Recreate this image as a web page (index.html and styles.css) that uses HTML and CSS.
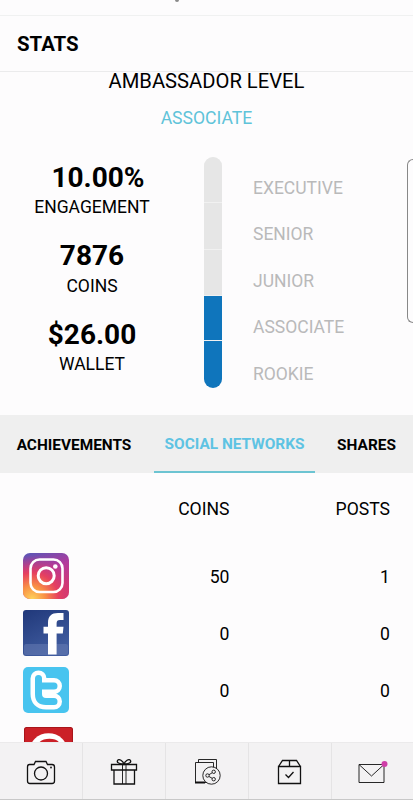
FILE: index.html
```html
<!DOCTYPE html>
<html lang="en">
<head>
    <meta charset="UTF-8">
    <meta name="viewport" content="width=device-width, initial-scale=1.0">
    <title>Stats</title>
    <link rel="stylesheet" href="styles.css">
</head>
<body>
    <div class="top-strip">
        <span class="pointer"></span>
    </div>

    <header class="header">
        <h1>STATS</h1>
    </header>

    <main class="content">
        <h2 class="level-title">AMBASSADOR LEVEL</h2>
        <p class="level-name">ASSOCIATE</p>

        <section class="overview">
            <div class="totals">
                <div class="total">
                    <strong class="engagement">10.00%</strong>
                    <span>ENGAGEMENT</span>
                </div>
                <div class="total">
                    <strong>7876</strong>
                    <span>COINS</span>
                </div>
                <div class="total">
                    <strong>$26.00</strong>
                    <span>WALLET</span>
                </div>
            </div>

            <div class="level-bar">
                <div class="step"></div>
                <div class="step"></div>
                <div class="step"></div>
                <div class="step filled"></div>
                <div class="step filled"></div>
            </div>

            <ul class="levels">
                <li>EXECUTIVE</li>
                <li>SENIOR</li>
                <li>JUNIOR</li>
                <li>ASSOCIATE</li>
                <li>ROOKIE</li>
            </ul>

            <div class="side-card"></div>
        </section>

        <nav class="tabs">
            <a class="tab tab-achievements">ACHIEVEMENTS</a>
            <a class="tab tab-social active">SOCIAL NETWORKS</a>
            <a class="tab tab-shares">SHARES</a>
        </nav>

        <section class="networks">
            <div class="row row-head">
                <span></span>
                <span>COINS</span>
                <span>POSTS</span>
            </div>
            <div class="row">
                <svg class="logo" viewBox="0 0 46 46">
                    <defs>
                        <linearGradient id="igBlue" x1="0" y1="0" x2="0.3" y2="1">
                            <stop offset="0" stop-color="#5558b8"/>
                            <stop offset="0.45" stop-color="#b33a9c"/>
                            <stop offset="1" stop-color="#d8386c"/>
                        </linearGradient>
                        <radialGradient id="igWarm" cx="0.2" cy="1" r="0.95">
                            <stop offset="0" stop-color="#fdd35c"/>
                            <stop offset="0.3" stop-color="#f99045"/>
                            <stop offset="0.6" stop-color="#e6405f"/>
                            <stop offset="1" stop-color="#c13584" stop-opacity="0"/>
                        </radialGradient>
                    </defs>
                    <rect width="46" height="46" rx="7" fill="url(#igBlue)"/>
                    <rect width="46" height="46" rx="7" fill="url(#igWarm)"/>
                    <rect x="7.500" y="6.500" width="32" height="32.500" rx="9" fill="none" stroke="#fff" stroke-width="2.600"/>
                    <circle cx="23.200" cy="22.700" r="8" fill="none" stroke="#fff" stroke-width="3"/>
                    <circle cx="32.300" cy="13.500" r="2.300" fill="#fff"/>
                </svg>
                <span>50</span>
                <span>1</span>
            </div>
            <div class="row">
                <svg class="logo" viewBox="0 0 46 46">
                    <defs>
                        <linearGradient id="fbBlue" x1="0" y1="0" x2="0.5" y2="1">
                            <stop offset="0" stop-color="#20387a"/>
                            <stop offset="1" stop-color="#405c9f"/>
                        </linearGradient>
                    </defs>
                    <rect width="46" height="46" rx="3" fill="url(#fbBlue)"/>
                    <rect x="1" y="34" width="44" height="11" rx="2" fill="#6c80b5" opacity="0.5"/>
                    <path d="M25 44.500V23.500H20.500V16.800H25V13C25 6 28.500 3 35 3H40.500V10H37C34.500 10 33.600 11 33.600 13.500V16.800H40.500L39.800 23.500H33.600V44.500Z" fill="#fff"/>
                </svg>
                <span>0</span>
                <span>0</span>
            </div>
            <div class="row">
                <svg class="logo" viewBox="0 0 46 46">
                    <rect width="46" height="46" rx="5" fill="#48c4ef"/>
                    <path d="M15.500 11.500V27Q15.500 34.500 23 34.500H31M15.500 19H31" fill="none" stroke="#fff" stroke-width="16" stroke-linecap="round" stroke-linejoin="round"/>
                    <path d="M15.500 11.500V27Q15.500 34.500 23 34.500H31M15.500 19H31" fill="none" stroke="#48c4ef" stroke-width="7" stroke-linecap="round" stroke-linejoin="round"/>
                </svg>
                <span>0</span>
                <span>0</span>
            </div>
            <div class="row row-cut">
                <svg class="logo logo-pin" viewBox="0 0 48 46">
                    <rect x="0.500" y="0.500" width="47" height="46" rx="2" fill="#cb2027" stroke="#a9151b"/>
                    <circle cx="24" cy="25" r="19" fill="#fff"/>
                    <path d="M11 26C12 15 17 11.500 25 11.500C34 11.500 38 17 37 26Z" fill="#cb2027"/>
                </svg>
            </div>
        </section>
    </main>

    <footer class="bottom-nav">
        <a class="nav-item">
            <svg viewBox="0 0 82 56">
                <path d="M29.500 11.500H34L35.500 8.500H46L47.500 11.500H52Q54.500 11.500 54.500 14V28Q54.500 30.500 52 30.500H30Q27.500 30.500 27.500 28V14Q27.500 11.500 29.500 11.500Z"/>
                <circle cx="41" cy="20.500" r="6.500"/>
                <circle class="solid" cx="51" cy="14.500" r="0.900"/>
            </svg>
        </a>
        <a class="nav-item">
            <svg viewBox="0 0 82 56">
                <path d="M28.500 11.500H53.500V17H28.500ZM31 17V31H51.500V17"/>
                <path class="thin" d="M39.500 11.500V31M43 11.500V31"/>
                <path d="M41 11C36 11 33.500 9.500 34.500 7.500C36 5 40 8 41 11C42 8 46 5 47.500 7.500C48.500 9.500 46 11 41 11Z"/>
            </svg>
        </a>
        <a class="nav-item">
            <svg viewBox="1 0 82 56">
                <path class="thin" d="M30.500 9.500V29.500H42M30.500 9.500H48.500V15M33.500 9.500V6.500H51.500V17"/>
                <path class="heavy" d="M30 29.500H40"/>
                <circle class="thin" cx="46.500" cy="22.500" r="8.700" fill="#f3f2f3"/>
                <circle class="thin" cx="42.500" cy="22.500" r="1.700"/>
                <circle class="thin" cx="48.700" cy="18.800" r="1.700"/>
                <circle class="thin" cx="48.700" cy="26.200" r="1.700"/>
                <path class="thin" d="M44 21.700L47 19.900M44 23.500L47 25.200"/>
            </svg>
        </a>
        <a class="nav-item">
            <svg viewBox="1 0 82 56">
                <path d="M30.500 13.500H52.500V30.500H30.500ZM30.500 13.500L34.500 7.500H48.500L52.500 13.500M41.500 7.500V13.500M37.500 21.500L40.500 24.500L45.500 19"/>
            </svg>
        </a>
        <a class="nav-item">
            <svg viewBox="1.500 0 82 56">
                <path class="thin" d="M28.500 11.500H53.500V29.500H28.500ZM28.500 11.500L41 23L53.500 11.500"/>
                <circle class="badge" cx="54" cy="11" r="3"/>
            </svg>
        </a>
    </footer>
</body>
</html>
```
FILE: styles.css
```css
* {
    box-sizing: border-box;
}

html, body {
    height: 100%;
    margin: 0;
    padding: 0;
}

body {
    display: flex;
    flex-direction: column;
    overflow: hidden;
    background-color: #fdfcfd;
    color: #000;
    font-family: Roboto, sans-serif;
}

h1, h2, p, ul {
    margin: 0;
    padding: 0;
    font-weight: normal;
}

.top-strip {
    flex: none;
    height: 16px;
    border-bottom: 1px solid #f0f1f1;
}

.pointer {
    display: block;
    width: 4px;
    height: 2px;
    margin-left: 175px;
    border-radius: 0 0 2px 2px;
    background-color: #8a8a8a;
}

.header {
    flex: none;
    height: 56px;
    padding: 16px 17px;
    border-bottom: 1px solid #ebebec;
}

.header h1 {
    font-size: 20.400px;
    font-weight: bold;
    line-height: 24px;
}

.content {
    flex: 1;
    min-height: 0;
    margin-top: -6px;
    overflow: hidden;
}

.level-title {
    height: 38px;
    padding-top: 3px;
    font-size: 20.200px;
    line-height: 24px;
    text-align: center;
}

.level-name {
    height: 53px;
    color: #5fc3d9;
    font-size: 17.600px;
    line-height: 28px;
    text-align: center;
}

.overview {
    display: flex;
    height: 258px;
}

.totals {
    width: 184px;
    padding-top: 5px;
}

.total {
    display: flex;
    flex-direction: column;
    height: 78.300px;
    text-align: center;
}

.total strong {
    font-size: 28px;
    line-height: 32.400px;
}

.total .engagement {
    padding-left: 12px;
}

.total span {
    font-size: 17.500px;
    line-height: 26.400px;
}

.level-bar {
    display: flex;
    flex-direction: column;
    gap: 1px;
    width: 18px;
    height: 231px;
    margin-left: 20px;
    overflow: hidden;
    border-radius: 9px;
    background-color: #f1f1f1;
}

.step {
    flex: 1;
    background-color: #e6e6e6;
}

.step.filled {
    flex: 0 0 44px;
    background-color: #0f75bc;
}

.step.filled:last-child {
    flex-basis: 47px;
}

.levels {
    flex: 1;
    padding: 7.600px 0 0 31px;
    color: #b9b9ba;
    font-size: 17.500px;
    line-height: 46.600px;
    list-style: none;
}

.side-card {
    width: 6px;
    height: 164px;
    margin-top: 2px;
    border: 1px solid #888;
    border-right: 0;
    border-radius: 7px 0 0 7px;
}

.tabs {
    display: flex;
    height: 58px;
    background-color: #efefef;
    font-size: 15.400px;
    font-weight: bold;
    line-height: 60px;
    text-align: center;
    white-space: nowrap;
}

.tab-achievements {
    width: 154px;
    padding-right: 6px;
}

.tab-social {
    width: 161px;
}

.tab-shares {
    flex: 1;
    padding-left: 5px;
}

.tab.active {
    border-bottom: 2px solid #6cc4d2;
    color: #5ec3e3;
    line-height: 59px;
}

.networks {
    padding-left: 23px;
}

.row {
    display: grid;
    grid-template-columns: 46px 160.500px 160.500px;
    align-items: center;
    height: 57.400px;
    font-size: 17.600px;
    text-align: right;
}

.row span {
    padding-top: 2px;
}

.row-head {
    height: 74px;
    padding-bottom: 5px;
}

.logo {
    display: block;
    width: 46px;
    height: 46px;
}

.row-cut {
    align-items: start;
    padding-top: 8px;
}

.logo-pin {
    width: 49px;
    height: 47px;
    margin-left: 1px;
}

.bottom-nav {
    display: flex;
    flex: none;
    height: 58px;
    border-top: 1px solid #ebeaeb;
    border-bottom: 1px solid #c8c8c8;
    background-color: #f3f2f3;
}

.nav-item {
    flex: 1;
    padding-top: 10px;
}

.nav-item + .nav-item {
    border-left: 1px solid #e5e4e5;
}

.nav-item svg {
    display: block;
    width: 82px;
    height: 56px;
    fill: none;
    stroke: #111;
    stroke-width: 1.300;
}

.nav-item .thin {
    stroke-width: 0.900;
}

.nav-item .heavy {
    stroke-width: 2;
}

.nav-item .solid {
    fill: #111;
    stroke: none;
}

.nav-item .badge {
    fill: #cf3fa8;
    stroke: none;
}
```
